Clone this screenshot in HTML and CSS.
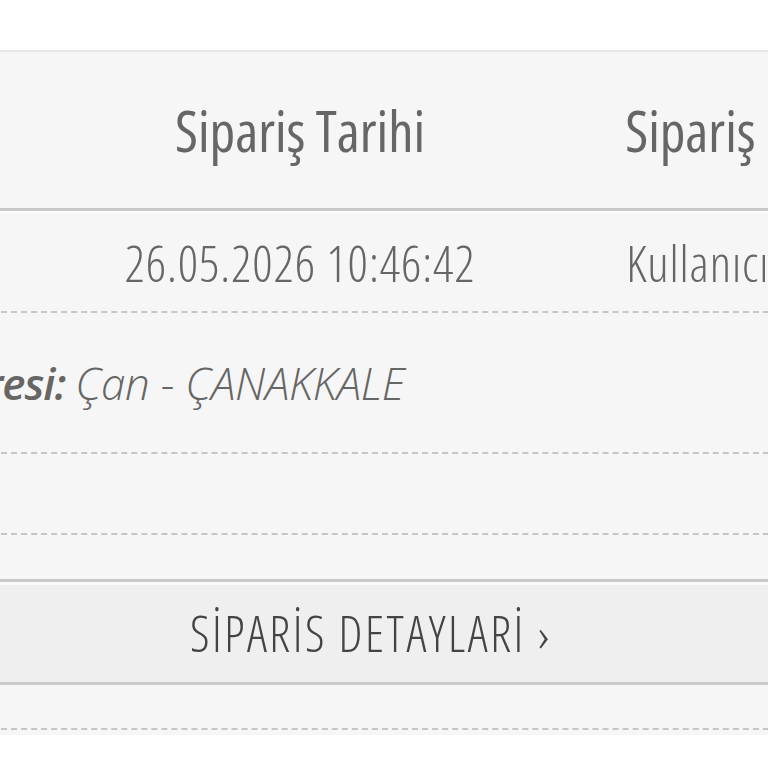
FILE: index.html
```html
<!DOCTYPE html>
<html>
<head>
  <title>Siparişlerim</title>
  <link rel="stylesheet" href="styles.css">
</head>
<body>

  <div class="orders">
    <div class="sheet">

      <!-- table head -->
      <div class="row thead">
        <div class="cell c-no">Sipariş No</div>
        <div class="cell c-date">Sipariş Tarihi</div>
        <div class="cell c-status">Sipariş Durumu</div>
      </div>

      <!-- order row -->
      <div class="row tbody">
        <div class="cell c-no">#100245871</div>
        <div class="cell c-date">26.05.2026 10:46:42</div>
        <div class="cell c-status">Kullanıcı Onayında</div>
      </div>

      <div class="line address">
        <b>Teslimat Adresi:</b> Çan - ÇANAKKALE
      </div>

      <div class="line empty"></div>

      <a class="details-btn" href="#">SİPARİS DETAYLARİ ›</a>

      <div class="line bottom"></div>

    </div>
  </div>

</body>
</html>
```
FILE: styles.css
```css
body {
  margin: 0;
  background: #fff;
  font-family: "Open Sans", sans-serif;
  font-stretch: 75%;
  color: #666;
  overflow: hidden;
}

.orders {
  margin-top: 50px;
  padding-bottom: 5px;
  border-top: 2px solid #e8e8e8;
  background: #f6f6f6;
  overflow: hidden;
}

.sheet {
  width: 1600px;
  margin-left: -400px;
}

.row {
  display: flex;
  align-items: center;
}

.cell {
  text-align: center;
  white-space: nowrap;
  line-height: 1;
}

.c-no { width: 470px; }
.c-date { width: 460px; }
.c-status { width: 490px; }

/* head */
.thead {
  height: 156px;
  font-size: 56px;
  border-bottom: 3px solid #c9c9c9;
  box-shadow: 0 2px 0 #fdfdfd;
}

/* order row */
.tbody {
  margin-top: 3px;
  height: 97px;
  font-size: 50px;
  font-weight: 300;
  letter-spacing: 0.9px;
  border-bottom: 2px dashed #c6c6c6;
}

.tbody .c-status {
  width: 508px;
}

.line {
  border-bottom: 2px dashed #c6c6c6;
}

.address {
  height: 139px;
  display: flex;
  align-items: center;
  padding-left: 162px;
  font-size: 44px;
  font-style: italic;
  font-weight: 300;
  font-stretch: 100%;
  letter-spacing: -0.3px;
  white-space: nowrap;
  line-height: 1;
}

.address b {
  font-weight: 600;
  letter-spacing: -1px;
  margin-right: 10px;
}

.empty {
  height: 79px;
}

/* details button */
.details-btn {
  display: block;
  margin-top: 44px;
  height: 100px;
  line-height: 102px;
  padding-left: 400px;
  padding-right: 26px;
  width: 742px;
  text-align: center;
  box-sizing: content-box;
  background: #efefef;
  border-top: 3px solid #c9c9c9;
  border-bottom: 3px solid #c9c9c9;
  box-shadow: inset 0 3px 0 #fafafa;
  color: #444;
  font-size: 49px;
  font-weight: 300;
  letter-spacing: 2.5px;
  text-decoration: none;
}

.bottom {
  height: 43px;
}
```
